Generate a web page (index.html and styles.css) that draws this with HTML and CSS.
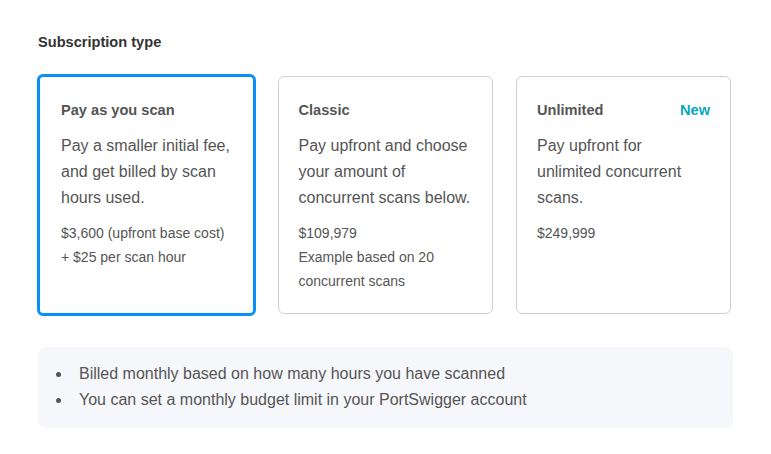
FILE: index.html
```html
<!DOCTYPE html>
<html>
<head>
<meta charset="utf-8">
<link rel="stylesheet" href="styles.css">
</head>
<body>
<div class="page">
  <h2 class="heading">Subscription type</h2>
  <div class="cards">
    <div class="card selected">
      <div class="card-head"><span class="card-title">Pay as you scan</span></div>
      <p class="card-desc">Pay a smaller initial fee, and get billed by scan hours used.</p>
      <p class="card-price">$3,600 (upfront base cost)<br>+ $25 per scan hour</p>
    </div>
    <div class="card">
      <div class="card-head"><span class="card-title">Classic</span></div>
      <p class="card-desc">Pay upfront and choose your amount of concurrent scans below.</p>
      <p class="card-price">$109,979<br>Example based on 20 concurrent scans</p>
    </div>
    <div class="card">
      <div class="card-head"><span class="card-title">Unlimited</span><span class="badge">New</span></div>
      <p class="card-desc">Pay upfront for unlimited concurrent scans.</p>
      <p class="card-price">$249,999</p>
    </div>
  </div>
  <div class="info">
    <ul class="info-list">
      <li>Billed monthly based on how many hours you have scanned</li>
      <li>You can set a monthly budget limit in your PortSwigger account</li>
    </ul>
  </div>
</div>
</body>
</html>
```

FILE: styles.css
```css
* { box-sizing: border-box; }
html, body { margin: 0; padding: 0; background: #fff; }
body { font-family: "Liberation Sans", Arial, sans-serif; color: #555; }
.page { padding: 32px 0 0 38px; width: 771px; }
.heading { margin: 0; font-size: 14.6px; font-weight: bold; color: #333; line-height: 20px; }
.cards { display: grid; grid-template-columns: 216px 215px 215px; gap: 23.5px; margin-top: 24px; }
.card { border: 1px solid #cfcfcf; border-radius: 6px; height: 238px; padding: 20px 20px 0 20px; }
.card.selected { border: 3px solid #0a90f5; margin: -2px -2px -2px -1px; height: 242px; width: 219px; padding: 20px 19px 0 21px; }
.card-head { display: flex; justify-content: space-between; align-items: center; height: 26px; }
.card-title { font-size: 14.6px; font-weight: bold; color: #555; }
.badge { font-size: 14.6px; font-weight: bold; color: #0aa5c0; }
.card-desc { margin: 10px 0 0 0; font-size: 16px; line-height: 26px; color: #555; }
.card-price { margin: 10px 0 0 0; font-size: 14px; line-height: 24px; color: #555; }
.info { margin-top: 33px; width: 695px; background: #f6f7fb; border-radius: 8px; padding: 14px 0 15px 0; }
.info-list { margin: 0; padding-left: 41px; font-size: 16px; line-height: 26px; color: #555; list-style: none; }
.info-list li { position: relative; }
.info-list li::before { content: ""; position: absolute; left: -23px; top: 11px; width: 5px; height: 5px; border-radius: 50%; background: #555; }
```
